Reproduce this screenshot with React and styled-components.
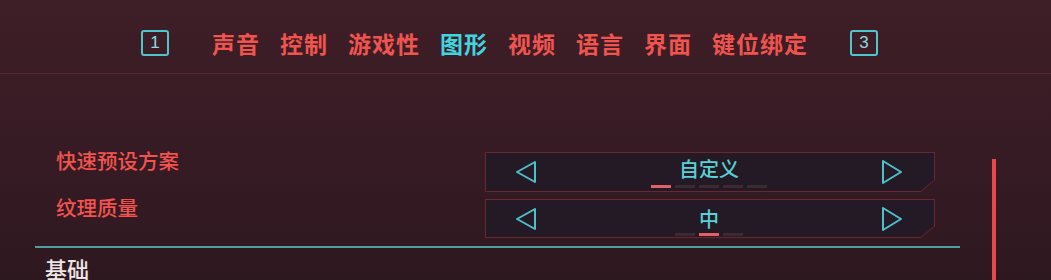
import React from "react";
import styled, { createGlobalStyle } from "styled-components";

const GlobalStyle = createGlobalStyle`
  html, body {
    margin: 0;
    padding: 0;
    background: #361b23;
  }
  #root {
    height: 280px;
    overflow: hidden;
  }
`;

const Page = styled.div`
  width: 1051px;
  height: 280px;
  display: flex;
  flex-direction: column;
  background: linear-gradient(180deg, #3e1e27 0%, #391c25 40%, #2e1820 100%);
  font-family: "Noto Sans CJK SC", "Noto Sans", sans-serif;
  overflow: hidden;
`;

const Header = styled.div`
  height: 74px;
  flex: none;
  display: flex;
  align-items: center;
  padding-left: 141px;
  padding-top: 12px;
  box-sizing: border-box;
  border-bottom: 1px solid rgba(110, 52, 62, 0.55);
`;

const KeyBox = styled.div`
  width: 28px;
  height: 26px;
  box-sizing: border-box;
  border: 2px solid #4fc6cc;
  border-radius: 3px;
  color: #8adde0;
  font-family: "Liberation Sans", sans-serif;
  font-size: 17px;
  display: flex;
  align-items: center;
  justify-content: center;
  margin-right: ${(p) => p.$gapRight || 0}px;
  margin-left: ${(p) => p.$gapLeft || 0}px;
`;

const Tabs = styled.div`
  display: flex;
  gap: 20px;
`;

const Tab = styled.div`
  font-size: 23px;
  letter-spacing: 1px;
  font-weight: bold;
  line-height: 28px;
  color: ${(p) => (p.$active ? "#3fd6e0" : "#f0544f")};
`;

const Body = styled.div`
  flex: 1;
  display: flex;
`;

const Main = styled.div`
  width: 960px;
  display: flex;
  flex-direction: column;
  padding-top: 78px;
`;

const Rows = styled.div`
  display: flex;
  flex-direction: column;
  gap: 7px;
  padding-left: 56px;
`;

const Row = styled.div`
  display: flex;
  align-items: flex-start;
`;

const Label = styled.div`
  width: 429px;
  margin-top: -5px;
  font-size: 20.5px;
  font-weight: 500;
  line-height: 26px;
  color: #f2534f;
`;

const SelectorFrame = styled.div`
  width: 450px;
  height: ${(p) => p.$h}px;
  background: #6b2630;
  clip-path: polygon(0 0, 100% 0, 100% calc(100% - 12px), calc(100% - 14px) 100%, 0 100%);
  position: relative;
`;

const SelectorInner = styled.div`
  position: absolute;
  inset: 1px;
  background: #241a26;
  clip-path: polygon(0 0, 100% 0, 100% calc(100% - 11px), calc(100% - 13px) 100%, 0 100%);
  display: flex;
  align-items: center;
  justify-content: space-between;
  padding: 0 31px 0 29px;
`;

const Value = styled.div`
  display: flex;
  flex-direction: column;
  align-items: center;
  padding-top: ${(p) => p.$top}px;
  align-self: stretch;
`;

const ValueText = styled.div`
  font-size: 20px;
  font-weight: 500;
  line-height: 22px;
  color: #58d2d6;
`;

const Ticks = styled.div`
  display: flex;
  gap: 4px;
  margin-top: ${(p) => p.$mt}px;
`;

const Tick = styled.div`
  width: 20px;
  height: 3px;
  background: ${(p) => (p.$on ? "#e0616a" : "#3a2a31")};
`;

const Divider = styled.div`
  margin-left: 35px;
  width: 925px;
  height: 2px;
  margin-top: 8px;
  background: #4e9ea2;
`;

const SectionTitle = styled.div`
  padding-left: 45px;
  margin-top: 7px;
  font-size: 22px;
  font-weight: 500;
  line-height: 26px;
  color: #ece4e5;
`;

const ScrollTrack = styled.div`
  width: 4px;
  margin-left: 32px;
  margin-top: 85px;
  background: #e8474d;
`;

const Arrow = ({ dir }) => (
  <svg width="22" height="24" viewBox="0 0 22 24">
    {dir === "left" ? (
      <polygon points="20,2 20,22 2,12" fill="none" stroke="#4fbfcc" strokeWidth="2" strokeLinejoin="round" />
    ) : (
      <polygon points="2,1 2,23 20,12" fill="none" stroke="#4fbfcc" strokeWidth="2" strokeLinejoin="round" />
    )}
  </svg>
);

const tabs = ["声音", "控制", "游戏性", "图形", "视频", "语言", "界面", "键位绑定"];

const settings = [
  { label: "快速预设方案", value: "自定义", ticks: 5, on: 0, h: 40, top: 5, mt: 5 },
  { label: "纹理质量", value: "中", ticks: 3, on: 1, h: 39, top: 8, mt: 3 },
];

function App() {
  return (
    <>
      <GlobalStyle />
      <Page>
        <Header>
          <KeyBox $gapRight={43}>1</KeyBox>
          <Tabs>
            {tabs.map((t) => (
              <Tab key={t} $active={t === "图形"}>
                {t}
              </Tab>
            ))}
          </Tabs>
          <KeyBox $gapLeft={42}>3</KeyBox>
        </Header>
        <Body>
          <Main>
            <Rows>
              {settings.map((s) => (
                <Row key={s.label}>
                  <Label>{s.label}</Label>
                  <SelectorFrame $h={s.h}>
                    <SelectorInner>
                      <Arrow dir="left" />
                      <Value $top={s.top}>
                        <ValueText>{s.value}</ValueText>
                        <Ticks $mt={s.mt}>
                          {Array.from({ length: s.ticks }).map((_, i) => (
                            <Tick key={i} $on={i === s.on} />
                          ))}
                        </Ticks>
                      </Value>
                      <Arrow dir="right" />
                    </SelectorInner>
                  </SelectorFrame>
                </Row>
              ))}
            </Rows>
            <Divider />
            <SectionTitle>基础</SectionTitle>
          </Main>
          <ScrollTrack />
        </Body>
      </Page>
    </>
  );
}

export default App;
